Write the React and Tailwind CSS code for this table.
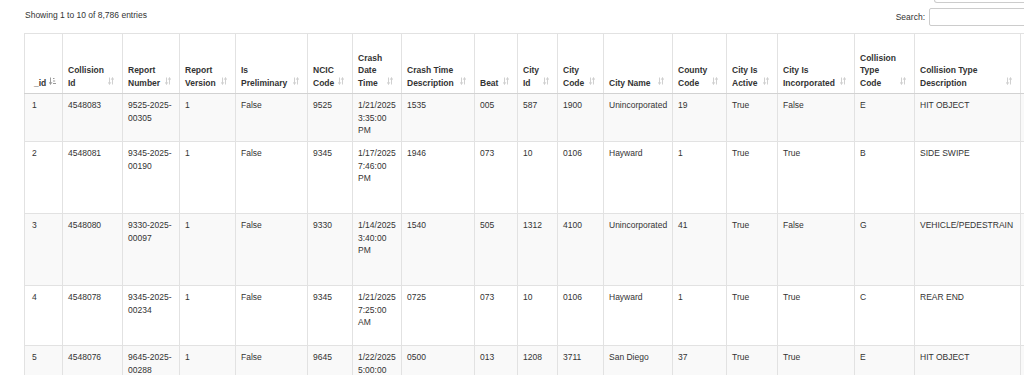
import React from 'react';

const columns = [
  { w: 38, label: '_id', sorted: true },
  { w: 60, label: 'Collision\nId' },
  { w: 57, label: 'Report\nNumber' },
  { w: 56, label: 'Report\nVersion' },
  { w: 72, label: 'Is\nPreliminary' },
  { w: 45, label: 'NCIC\nCode' },
  { w: 49, label: 'Crash\nDate\nTime' },
  { w: 73, label: 'Crash Time\nDescription' },
  { w: 43, label: 'Beat' },
  { w: 40, label: 'City\nId' },
  { w: 46, label: 'City\nCode' },
  { w: 69, label: 'City Name' },
  { w: 54, label: 'County\nCode' },
  { w: 51, label: 'City Is\nActive' },
  { w: 77, label: 'City Is\nIncorporated' },
  { w: 60, label: 'Collision\nType\nCode' },
  { w: 106, label: 'Collision Type\nDescription' },
  { w: 160, label: '' },
];

const rows = [
  { h: 48, cells: ['1', '4548083', '9525-2025-\n00305', '1', 'False', '9525', '1/21/2025\n3:35:00\nPM', '1535', '005', '587', '1900', 'Unincorporated', '19', 'True', 'False', 'E', 'HIT OBJECT', ''] },
  { h: 72, cells: ['2', '4548081', '9345-2025-\n00190', '1', 'False', '9345', '1/17/2025\n7:46:00\nPM', '1946', '073', '10', '0106', 'Hayward', '1', 'True', 'True', 'B', 'SIDE SWIPE', ''] },
  { h: 72, cells: ['3', '4548080', '9330-2025-\n00097', '1', 'False', '9330', '1/14/2025\n3:40:00\nPM', '1540', '505', '1312', '4100', 'Unincorporated', '41', 'True', 'False', 'G', 'VEHICLE/PEDESTRAIN', ''] },
  { h: 60, cells: ['4', '4548078', '9345-2025-\n00234', '1', 'False', '9345', '1/21/2025\n7:25:00\nAM', '0725', '073', '10', '0106', 'Hayward', '1', 'True', 'True', 'C', 'REAR END', ''] },
  { h: 60, cells: ['5', '4548076', '9645-2025-\n00288', '1', 'False', '9645', '1/22/2025\n5:00:00\nAM', '0500', '013', '1208', '3711', 'San Diego', '37', 'True', 'True', 'E', 'HIT OBJECT', ''] },
];

const SortIcon = ({ sorted }) => {
  if (sorted) {
    return (
      <svg width="7" height="8" viewBox="0 0 7 8" className="absolute right-[6px] bottom-[8px]">
        <path d="M1.5 0.5 V7" stroke="#9a9a9a" strokeWidth="1" fill="none" />
        <path d="M0 5 L1.5 7.5 L3 5" stroke="#9a9a9a" strokeWidth="0.9" fill="none" />
        <path d="M4 1.5 H5.5 M4 4 H6.2 M4 6.5 H7" stroke="#9a9a9a" strokeWidth="1" fill="none" />
      </svg>
    );
  }
  return (
    <svg width="6" height="8" viewBox="0 0 6 8" className="absolute right-[8px] bottom-[8px]">
      <path d="M1.5 0.5 V7.2" stroke="#d0d0d0" strokeWidth="1" fill="none" />
      <path d="M0.2 5.2 L1.5 7.5 L2.8 5.2" stroke="#d0d0d0" strokeWidth="0.9" fill="none" />
      <path d="M4.5 7.5 V0.8" stroke="#d0d0d0" strokeWidth="1" fill="none" />
      <path d="M3.2 2.8 L4.5 0.5 L5.8 2.8" stroke="#d0d0d0" strokeWidth="0.9" fill="none" />
    </svg>
  );
};

export default function App() {
  const tableWidth = columns.reduce((s, c) => s + c.w, 0);

  return (
    <div className="w-[1024px] h-[375px] overflow-hidden bg-white text-[#333] text-[8.5px] leading-[12.5px]" style={{ fontFamily: '"Liberation Sans", Arial, sans-serif' }}>
      <div className="flex justify-end h-[3px]">
        <div className="w-[100px] h-[3px] border border-t-0 border-[#ccc] rounded-bl-[3px] mr-[-10px]" />
      </div>
      <div className="flex justify-between items-center pl-[25px] mt-[5px] h-[18px]">
        <div className="mt-[-3px]">Showing 1 to 10 of 8,786 entries</div>
        <div className="flex items-center gap-[4px] mr-[-20px]">
          <span>Search:</span>
          <div className="w-[115px] h-[18px] border border-[#ccc] rounded-[2px] bg-white" />
        </div>
      </div>
      <div className="pl-[24px] mt-[7px]">
        <table className="table-fixed border-collapse border-l border-t border-[#e2e2e2]" style={{ width: tableWidth }}>
          <colgroup>
            {columns.map((c, i) => (
              <col key={i} style={{ width: c.w }} />
            ))}
          </colgroup>
          <thead>
            <tr className="h-[60px]">
              {columns.map((c, i) => (
                <th
                  key={i}
                  className={`relative align-bottom text-left font-bold whitespace-pre-line border-r border-b border-r-[#e2e2e2] border-b-[#d2d2d2] pr-[16px] pb-[4px] ${i === 0 ? 'pl-[9px]' : 'pl-[5px]'}`}
                >
                  {c.label}
                  {c.label && <SortIcon sorted={c.sorted} />}
                </th>
              ))}
            </tr>
          </thead>
          <tbody>
            {rows.map((r, ri) => (
              <tr key={ri} className={ri % 2 === 0 ? 'bg-[#f9f9f9]' : 'bg-white'} style={{ height: r.h }}>
                {r.cells.map((cell, ci) => (
                  <td
                    key={ci}
                    className={`align-top whitespace-pre-line border-r border-b border-[#e2e2e2] pt-[5px] pr-[4px] ${ci === 0 ? 'pl-[7px]' : 'pl-[5px]'}`}
                  >
                    {cell}
                  </td>
                ))}
              </tr>
            ))}
          </tbody>
        </table>
      </div>
    </div>
  );
}
